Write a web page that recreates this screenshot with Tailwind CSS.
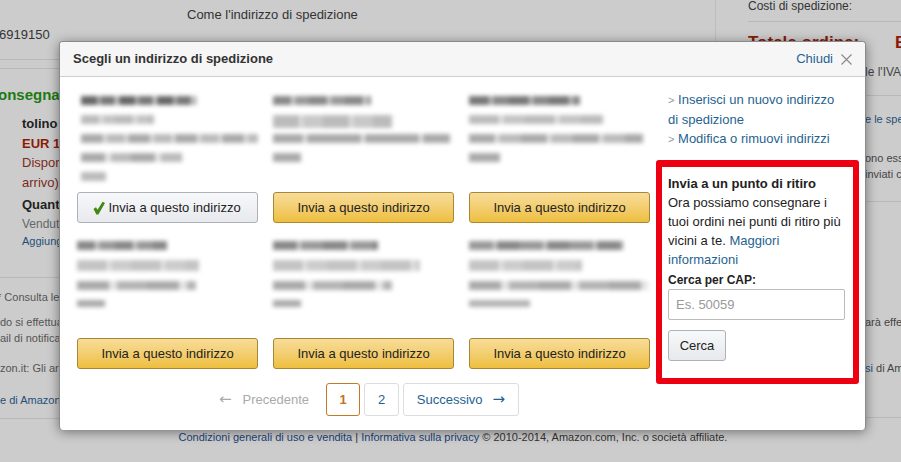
<!DOCTYPE html>
<html lang="it">
<head>
    <meta charset="UTF-8">
    <title>Scegli un indirizzo di spedizione</title>
    <script src="https://cdn.jsdelivr.net/npm/@tailwindcss/browser@4"></script>
</head>
<body class="bg-[#cccccc]">
    <div class="relative w-[901px] h-[462px] overflow-hidden font-['Liberation_Sans',Arial,sans-serif] text-[12px] text-[#444]">
        <!-- page behind the popup -->
        <div class="flex h-[431px]">
            <div class="w-[59px] shrink-0 overflow-hidden whitespace-nowrap">
                <div class="mt-[27px] h-[16px] leading-[16px] text-[13px] text-[#333] -ml-[1px]">6919150</div>
                <div class="mt-[16px] h-[10px] border-y border-[#b8b8b8] w-[59px]"></div>
                <div class="mt-[17px] h-[18px] leading-[18px] -ml-[2px] text-[15px] font-bold text-[#1c7a12]">onsegna</div>
                <div class="mt-[12px] pl-[22px] leading-[16px] text-[13px] font-bold text-[#222]">tolino</div>
                <div class="mt-[4px] pl-[22px] leading-[16px] text-[13px] font-bold text-[#8a1a08]">EUR 1</div>
                <div class="mt-[3px] pl-[22px] leading-[16px] text-[13px] text-[#7c2a1b]">Dispor</div>
                <div class="mt-[4px] pl-[22px] leading-[16px] text-[13px] text-[#7c2a1b]">arrivo)</div>
                <div class="mt-[6px] pl-[22px] leading-[16px] text-[13px] font-bold text-[#222]">Quant</div>
                <div class="mt-[3px] pl-[22px] leading-[16px] text-[#666]">Venduti</div>
                <div class="mt-[1px] pl-[22px] leading-[16px] text-[11px] text-[#1f4f78]">Aggiung</div>
                <div class="mt-[28px] border-t border-[#b8b8b8] w-[59px]"></div>
                <div class="mt-[11px] -ml-[3px] leading-[16px] text-[11px] text-[#555]">* Consulta le</div>
                <div class="mt-[9px] leading-[16px] text-[11px] text-[#555]">do si effettua</div>
                <div class="leading-[16px] text-[11px] text-[#555]">ail di notifica</div>
                <div class="mt-[14px] leading-[16px] text-[11px] text-[#555]">zon.it: Gli art</div>
                <div class="mt-[16px] leading-[16px] text-[11px] text-[#1f4f78]">e di Amazon</div>
                <div class="mt-[10px] border-t border-[#b8b8b8] w-[59px]"></div>
            </div>
            <div class="w-[657px] shrink-0 border-r border-[#bdbdbd] pl-[128px] pt-[5px] h-[41px] whitespace-nowrap text-[13px] text-[#333]">Come l'indirizzo di spedizione</div>
            <div class="flex-1 min-w-0 overflow-hidden whitespace-nowrap">
                <div class="ml-[32px] h-[22px] border-b border-[#b8b8b8] leading-[12px] text-[#333]">Costi di spedizione:</div>
                <div class="ml-[32px] mt-[13px] h-[10px] flex justify-between leading-[16px] text-[17px] font-bold text-[#8a1a08]"><span>Totale ordine:</span><span class="-mr-[30px]">EUR</span></div>
                <div class="ml-[149px] mt-[19px] leading-[16px] text-[#444]">le l'IVA</div>
                <div class="ml-[149px] mt-[15px] border-t border-[#b8b8b8]"></div>
                <div class="ml-[149px] mt-[15px] leading-[16px] text-[11px] text-[#1f4f78]">e le spe</div>
                <div class="ml-[149px] mt-[23px] leading-[16px] text-[11px]">ono ess</div>
                <div class="ml-[149px] leading-[16px] text-[11px]">inviati c</div>
                <div class="ml-[149px] mt-[19px] border-t border-[#b8b8b8]"></div>
                <div class="ml-[149px] mt-[112px] leading-[16px] text-[11px]">arà effe</div>
                <div class="ml-[149px] mt-[30px] leading-[16px] text-[11px]"><span class="text-[#1f4f78]">si</span> di Am</div>
                <div class="ml-[149px] mt-[41px] border-t border-[#b8b8b8]"></div>
            </div>
        </div>
        <div class="text-center text-[11px] leading-[13px] text-[#333] pl-[5px]"><span class="text-[#1b3f78]">Condizioni generali di uso e vendita</span> | <span class="text-[#1b3f78]">Informativa sulla privacy</span> © 2010-2014, Amazon.com, Inc. o società affiliate.</div>

        <!-- popup -->
        <div class="absolute left-[59px] top-[41px] w-[807px] h-[389px] bg-white rounded-[4px] border border-[#8a8a8a] border-b-0 shadow-[0_2px_12px_rgba(0,0,0,0.45)] overflow-hidden">
            <div class="h-[35px] flex items-center justify-between bg-[#f6f6f6] border-b border-[#cfcfcf] pl-[13px] pr-[13px]">
                <span class="font-bold text-[13px] text-[#333]">Scegli un indirizzo di spedizione</span>
                <div class="flex items-center gap-[8px]">
                    <span class="text-[13px] text-[#1f6391]">Chiudi</span>
                    <svg width="11" height="11" viewBox="0 0 11 11" fill="none" stroke="#888" stroke-width="1.1"><path d="M.5.5l10 10M10.5.5l-10 10"/></svg>
                </div>
            </div>
            <div class="flex pl-[17px] pt-[15px]">
                <div>
                    <div class="grid grid-cols-[181px_181px_181px] gap-x-[15px] gap-y-[15px]">
                        <div class="h-[131px] flex flex-col">
                            <div class="h-[100px] pt-[4px] pl-[4px] flex flex-col gap-[10px] blur-[2px]">
                                <div class="h-[9px] w-[115px] bg-[repeating-linear-gradient(90deg,#666_0_16px,#aaa_16px_20px,#777_20px_34px,#ccc_34px_38px)]"></div>
                                <div class="h-[9px] w-[73px] bg-[repeating-linear-gradient(90deg,#bbb_0_18px,#ddd_18px_22px,#c4c4c4_22px_34px)]"></div>
                                <div class="h-[9px] w-[177px] bg-[repeating-linear-gradient(90deg,#aaa_0_22px,#ddd_22px_26px,#bbb_26px_44px,#e4e4e4_44px_47px)]"></div>
                                <div class="h-[9px] w-[101px] bg-[repeating-linear-gradient(90deg,#aaa_0_24px,#e4e4e4_24px_30px,#bbb_30px_50px)]"></div>
                                <div class="h-[9px] w-[25px] bg-[#bbb]"></div>
                            </div>
                            <button class="mt-auto h-[31px] w-full rounded-[3px] border border-[#adb1b8] bg-linear-to-b from-[#f7f8fa] to-[#e7e9ec] text-[13px] text-[#222] flex items-center justify-center gap-[3px] pr-[1px]">
                                <svg width="12" height="14" viewBox="0 0 12 14"><path d="M.5 8l2.4-1.8 1.7 2.6L9.6 .8 12 2 5.4 13.5H3.4z" fill="#3f8a14"/></svg>
                                Invia a questo indirizzo
                            </button>
                        </div>
                        <div class="h-[131px] flex flex-col">
                            <div class="h-[100px] pt-[4px] flex flex-col gap-[10px] blur-[2px]">
                                <div class="h-[9px] w-[98px] bg-[repeating-linear-gradient(90deg,#888_0_18px,#ccc_18px_22px,#999_22px_36px)]"></div>
                                <div class="h-[13px] w-[119px] bg-[repeating-linear-gradient(90deg,#bbb_0_26px,#ddd_26px_30px,#c8c8c8_30px_50px)]"></div>
                                <div class="-mt-[4px] h-[9px] w-[177px] bg-[repeating-linear-gradient(90deg,#aaa_0_30px,#e4e4e4_30px_34px,#aaa_34px_58px)]"></div>
                                <div class="h-[9px] w-[28px] bg-[#aaa]"></div>
                            </div>
                            <button class="mt-auto h-[31px] w-full rounded-[3px] border border-[#a88734] bg-linear-to-b from-[#f8dc98] to-[#eebf3c] text-[13px] text-[#222]">Invia a questo indirizzo</button>
                        </div>
                        <div class="h-[131px] flex flex-col">
                            <div class="h-[100px] pt-[4px] flex flex-col gap-[10px] blur-[2px]">
                                <div class="h-[9px] w-[111px] bg-[repeating-linear-gradient(90deg,#777_0_20px,#bbb_20px_24px,#888_24px_40px)]"></div>
                                <div class="h-[9px] w-[134px] bg-[repeating-linear-gradient(90deg,#bbb_0_30px,#e4e4e4_30px_34px,#c4c4c4_34px_56px)]"></div>
                                <div class="h-[9px] w-[174px] bg-[repeating-linear-gradient(90deg,#aaa_0_26px,#e4e4e4_26px_30px,#bbb_30px_52px)]"></div>
                                <div class="h-[9px] w-[31px] bg-[#aaa]"></div>
                            </div>
                            <button class="mt-auto h-[31px] w-full rounded-[3px] border border-[#a88734] bg-linear-to-b from-[#f8dc98] to-[#eebf3c] text-[13px] text-[#222]">Invia a questo indirizzo</button>
                        </div>
                        <div class="h-[131px] flex flex-col">
                            <div class="h-[100px] pt-[3px] flex flex-col gap-[10px] blur-[2px]">
                                <div class="h-[9px] w-[90px] bg-[repeating-linear-gradient(90deg,#888_0_18px,#ccc_18px_22px,#999_22px_38px)]"></div>
                                <div class="h-[11px] w-[122px] bg-[repeating-linear-gradient(90deg,#c4c4c4_0_30px,#e4e4e4_30px_34px,#ccc_34px_54px)]"></div>
                                <div class="h-[9px] w-[119px] bg-[repeating-linear-gradient(90deg,#aaa_0_32px,#e4e4e4_32px_40px,#b4b4b4_40px_70px)]"></div>
                                <div class="h-[7px] w-[28px] bg-[#aaa]"></div>
                            </div>
                            <button class="mt-auto h-[31px] w-full rounded-[3px] border border-[#a88734] bg-linear-to-b from-[#f8dc98] to-[#eebf3c] text-[13px] text-[#222]">Invia a questo indirizzo</button>
                        </div>
                        <div class="h-[131px] flex flex-col">
                            <div class="h-[100px] pt-[3px] flex flex-col gap-[10px] blur-[2px]">
                                <div class="h-[9px] w-[105px] bg-[repeating-linear-gradient(90deg,#888_0_24px,#ccc_24px_28px,#999_28px_50px)]"></div>
                                <div class="h-[11px] w-[147px] bg-[repeating-linear-gradient(90deg,#c4c4c4_0_30px,#e4e4e4_30px_34px,#ccc_34px_54px)]"></div>
                                <div class="h-[9px] w-[119px] bg-[repeating-linear-gradient(90deg,#aaa_0_32px,#e4e4e4_32px_40px,#b4b4b4_40px_70px)]"></div>
                                <div class="h-[7px] w-[28px] bg-[#aaa]"></div>
                            </div>
                            <button class="mt-auto h-[31px] w-full rounded-[3px] border border-[#a88734] bg-linear-to-b from-[#f8dc98] to-[#eebf3c] text-[13px] text-[#222]">Invia a questo indirizzo</button>
                        </div>
                        <div class="h-[131px] flex flex-col">
                            <div class="h-[100px] pt-[3px] flex flex-col gap-[10px] blur-[2px]">
                                <div class="h-[9px] w-[154px] bg-[repeating-linear-gradient(90deg,#999_0_24px,#ccc_24px_28px,#888_28px_50px)]"></div>
                                <div class="h-[11px] w-[113px] bg-[repeating-linear-gradient(90deg,#c4c4c4_0_30px,#e4e4e4_30px_34px,#ccc_34px_54px)]"></div>
                                <div class="h-[9px] w-[179px] bg-[repeating-linear-gradient(90deg,#aaa_0_32px,#e4e4e4_32px_40px,#b4b4b4_40px_70px)]"></div>
                                <div class="h-[7px] w-[61px] bg-[#b4b4b4]"></div>
                            </div>
                            <button class="mt-auto h-[31px] w-full rounded-[3px] border border-[#a88734] bg-linear-to-b from-[#f8dc98] to-[#eebf3c] text-[13px] text-[#222]">Invia a questo indirizzo</button>
                        </div>
                    </div>
                    <div class="mt-[14px] flex items-center text-[13px] pl-[142px]">
                        <span class="text-[#aaa] w-[107px] flex items-center gap-[11px]"><span class="text-[15px] leading-none font-['DejaVu_Sans']">←</span>Precedente</span>
                        <span class="w-[34px] h-[33px] rounded-[3px] border border-[#c17a2a] text-[#c4701e] font-bold flex items-center justify-center">1</span>
                        <span class="ml-[4px] w-[35px] h-[33px] rounded-[3px] border border-[#ddd] text-[#1f6391] flex items-center justify-center">2</span>
                        <span class="ml-[4px] w-[116px] h-[33px] rounded-[3px] border border-[#ddd] text-[#1f6391] flex items-center justify-center gap-[10px]">Successivo<span class="text-[15px] leading-none font-['DejaVu_Sans']">→</span></span>
                    </div>
                </div>
                <div class="ml-[6px] w-[203px]">
                    <div class="-mt-[2px] pl-[12px] pr-[24px] text-[13px] leading-[19px] text-[#1f6391]">
                        <p><span class="text-[#999] text-[11px]">&gt;</span> Inserisci un nuovo indirizzo di spedizione</p>
                        <p><span class="text-[#999] text-[11px]">&gt;</span> Modifica o rimuovi indirizzi</p>
                    </div>
                    <div class="mt-[11px] h-[224px] border-[6px] border-[#ec0011] rounded-[3px] border-t-[7px] pl-[6px] pt-[7px] text-[13px] leading-[19px] text-[#222]">
                        <div class="w-[177px]">
                            <p class="font-bold">Invia a un punto di ritiro</p>
                            <p class="w-[174px]">Ora possiamo consegnare i tuoi ordini nei punti di ritiro più vicini a te. <span class="text-[#1f6391]">Maggiori informazioni</span></p>
                            <p class="mt-[2px] font-bold text-[12px]">Cerca per CAP:</p>
                            <div class="-mt-[1px] h-[31px] rounded-[2px] border border-[#bbb] pl-[7px] flex items-center text-[#999] text-[13px]">Es. 50059</div>
                            <button class="mt-[10px] h-[31px] w-[58px] rounded-[3px] border border-[#adb1b8] bg-linear-to-b from-[#f7f8fa] to-[#e7e9ec] text-[13px] text-[#222] flex items-center justify-center">Cerca</button>
                        </div>
                    </div>
                </div>
            </div>
        </div>
    </div>
</body>
</html>
